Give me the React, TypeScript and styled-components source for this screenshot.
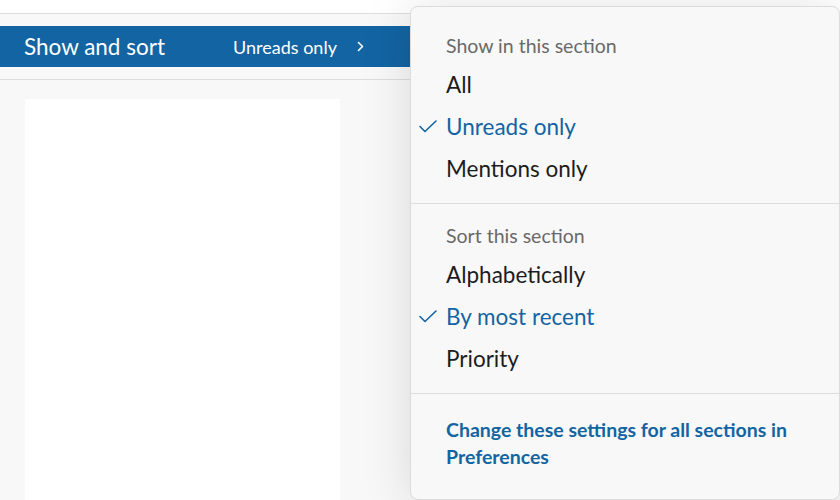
import React from "react";
import styled, { createGlobalStyle } from "styled-components";

const Global = createGlobalStyle`
  html, body { margin: 0; padding: 0; }
  body {
    width: 840px;
    height: 500px;
    overflow: hidden;
    background: #f8f8f8;
    font-family: Lato, "Noto Sans", sans-serif;
    -webkit-font-smoothing: antialiased;
  }
`;

const Page = styled.div`
  position: relative;
  width: 840px;
  height: 500px;
  overflow: hidden;
  background: #f8f8f8;
  display: flex;
  flex-direction: column;
`;

const TopStrip = styled.div`
  height: 13px;
  background: #ffffff;
  border-bottom: 1px solid #dddddd;
  flex-shrink: 0;
`;

const Bar = styled.div`
  margin-top: 12px;
  height: 41px;
  background: #1264a3;
  display: flex;
  align-items: center;
  padding-left: 24px;
  color: #ffffff;
  flex-shrink: 0;
`;

const BarTitle = styled.span`
  font-size: 22.5px;
  width: 209px;
`;

const BarValue = styled.span`
  font-size: 18px;
  display: flex;
  align-items: center;
  gap: 20px;
`;

const Rule = styled.div`
  margin-top: 12px;
  height: 1px;
  background: #dddddd;
  flex-shrink: 0;
`;

const Body = styled.div`
  flex: 1;
  padding: 19px 0 0 25px;
  display: flex;
`;

const Sheet = styled.div`
  width: 315px;
  background: #ffffff;
`;

const Menu = styled.div`
  position: absolute;
  top: 6px;
  left: 410px;
  width: 428px;
  height: 492px;
  background: #f8f8f8;
  border: 1px solid #dcdcdc;
  border-radius: 8px;
  box-shadow: 0 4px 50px rgba(0, 0, 0, 0.13);
  display: flex;
  flex-direction: column;
`;

const Section = styled.div<{ $top: number; $bottom: number }>`
  padding: ${(p) => p.$top}px 0 ${(p) => p.$bottom}px;
  border-bottom: 1px solid #dddddd;
  display: flex;
  flex-direction: column;
`;

const Heading = styled.div`
  padding-left: 35px;
  height: 24px;
  line-height: 24px;
  font-size: 19.5px;
  color: #696969;
  margin-bottom: 5px;
`;

const Item = styled.div<{ $selected?: boolean }>`
  height: 42px;
  display: flex;
  align-items: center;
  font-size: 22.5px;
  color: ${(p) => (p.$selected ? "#1264a3" : "#1d1c1d")};
`;

const CheckSlot = styled.span`
  width: 35px;
  flex-shrink: 0;
  display: flex;
  align-items: center;
  padding-left: 8px;
  box-sizing: border-box;
`;

const Footer = styled.div`
  padding: 22px 30px 0 35px;
`;

const Link = styled.div`
  font-size: 19.5px;
  font-weight: 700;
  line-height: 27px;
  color: #1264a3;
  width: 360px;
`;

const Check = () => (
  <svg width="18" height="13" viewBox="0 0 18 13" fill="none">
    <path d="M1 6.5 L6 11.5 L17 1" stroke="#1264a3" strokeWidth="1.6" strokeLinecap="round" strokeLinejoin="round" />
  </svg>
);

const Chevron = () => (
  <svg width="7" height="11" viewBox="0 0 7 11" fill="none">
    <path d="M1.5 1.5 L5.5 5.5 L1.5 9.5" stroke="#ffffff" strokeWidth="1.6" strokeLinecap="round" strokeLinejoin="round" />
  </svg>
);

type Opt = { label: string; selected?: boolean };

const showOpts: Opt[] = [
  { label: "All" },
  { label: "Unreads only", selected: true },
  { label: "Mentions only" },
];

const sortOpts: Opt[] = [
  { label: "Alphabetically" },
  { label: "By most recent", selected: true },
  { label: "Priority" },
];

const Options = ({ opts }: { opts: Opt[] }) => (
  <>
    {opts.map((o) => (
      <Item key={o.label} $selected={o.selected}>
        <CheckSlot>{o.selected ? <Check /> : null}</CheckSlot>
        {o.label}
      </Item>
    ))}
  </>
);

export default function App() {
  return (
    <>
      <Global />
      <Page>
        <TopStrip />
        <Bar>
          <BarTitle>Show and sort</BarTitle>
          <BarValue>
            Unreads only
            <Chevron />
          </BarValue>
        </Bar>
        <Rule />
        <Body>
          <Sheet />
        </Body>
        <Menu>
          <Section $top={27} $bottom={14}>
            <Heading>Show in this section</Heading>
            <Options opts={showOpts} />
          </Section>
          <Section $top={20} $bottom={14}>
            <Heading>Sort this section</Heading>
            <Options opts={sortOpts} />
          </Section>
          <Footer>
            <Link>Change these settings for all sections in Preferences</Link>
          </Footer>
        </Menu>
      </Page>
    </>
  );
}
